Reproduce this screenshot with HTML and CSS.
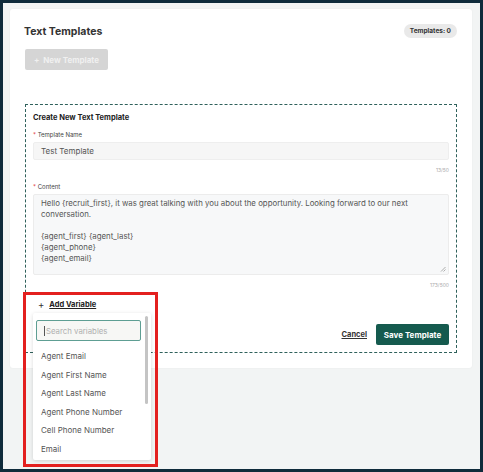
FILE: index.html
```html
<!DOCTYPE html>
<html>
<head>
<meta charset="utf-8">
<link rel="stylesheet" href="styles.css">
</head>
<body>
<div class="frame">
  <div class="card">
    <div class="header">
      <h1 class="title">Text Templates</h1>
      <span class="badge">Templates: 0</span>
    </div>
    <button class="new-btn">+&nbsp;&nbsp;New Template</button>
    <div class="create-box">
      <h2 class="box-title">Create New Text Template</h2>
      <div class="label"><span class="req">*</span> Template Name</div>
      <div class="input">Test Template</div>
      <div class="counter">13/50</div>
      <div class="label"><span class="req">*</span> Content</div>
      <div class="textarea">
        <div>Hello {recruit_first}, it was great talking with you about the opportunity. Looking forward to our next conversation.</div>
        <div class="blank"></div>
        <div>{agent_first} {agent_last}</div>
        <div>{agent_phone}</div>
        <div>{agent_email}</div>
        <svg class="grip" width="6" height="6" viewBox="0 0 6 6"><path d="M5.5 1 L1 5.5 M5.5 3.5 L3.5 5.5" stroke="#999" stroke-width="0.8"/></svg>
      </div>
      <div class="counter counter-last">173/500</div>
      <div class="picker">
        <div class="add-var"><span class="plus">+</span><span class="add-text">Add Variable</span></div>
        <div class="dropdown">
          <div class="search"><span class="caret"></span>Search variables</div>
          <ul class="options">
            <li>Agent Email</li>
            <li>Agent First Name</li>
            <li>Agent Last Name</li>
            <li>Agent Phone Number</li>
            <li>Cell Phone Number</li>
            <li>Email</li>
          </ul>
          <div class="scrollbar"></div>
        </div>
      </div>
      <div class="actions">
        <a class="cancel">Cancel</a>
        <button class="save">Save Template</button>
      </div>
    </div>
  </div>
  <div class="highlight"></div>
</div>
</body>
</html>
```

FILE: styles.css
```css
* { box-sizing: border-box; }
html, body { margin: 0; padding: 0; }
body { font-family: "Inter", "DejaVu Sans", sans-serif; color: #333; }

.frame {
  position: relative;
  width: 483px;
  height: 472px;
  border: 3px solid #0f2b3b;
  background: #f2f4f4;
  padding: 6px 8px 0 7px;
}

.card {
  background: #fff;
  border-radius: 3px;
  padding: 15px 15px 15px 14px;
  box-shadow: 0 0 2px rgba(0,0,0,0.05);
}

.header {
  display: flex;
  justify-content: space-between;
  align-items: center;
  height: 14px;
}
.title {
  margin: 0;
  font-size: 10.5px;
  font-weight: 700;
  color: #333;
}
.badge {
  background: #e9e9e9;
  border-radius: 7px;
  font-size: 6.5px;
  font-weight: 700;
  color: #333;
  padding: 3px 6px;
}

.new-btn {
  display: block;
  margin-top: 11px;
  margin-left: 1px;
  width: 83px;
  height: 21px;
  border: none;
  border-radius: 2px;
  background: #d5d5d5;
  color: #f0f0f0;
  font-family: inherit;
  font-size: 8px;
  font-weight: 700;
  padding: 0;
}

.create-box {
  margin-top: 34px;
  margin-left: 1px;
  border: 1px dashed #2f615b;
  padding: 8px 7px 7px 7px;
}
.box-title {
  margin: 0 0 9px 0;
  font-size: 7.5px;
  font-weight: 700;
  color: #222;
}
.label {
  font-size: 6px;
  color: #444;
  margin-bottom: 4px;
}
.req { color: #e03a3a; }

.input {
  height: 18px;
  background: #f6f6f6;
  border: 1px solid #eee;
  border-radius: 2px;
  padding-left: 7px;
  font-size: 8px;
  line-height: 16px;
  color: #555;
}
.counter {
  text-align: right;
  font-size: 5px;
  color: #aaa;
  margin: 7px 0 10px;
}
.counter-last { margin-bottom: 0; }

.textarea {
  position: relative;
  height: 81px;
  background: #f7f8f9;
  border: 1px solid #ececec;
  border-radius: 2px;
  padding: 3px 7px;
  font-size: 7.85px;
  line-height: 11px;
  color: #555;
}
.blank { height: 11px; }
.grip { position: absolute; right: 2px; bottom: 2px; }

.picker {
  position: relative;
  padding-left: 5px;
  margin-top: 12px;
}
.add-var {
  font-size: 7.5px;
  font-weight: 700;
  color: #222;
  line-height: 10px;
  display: flex;
  align-items: center;
}
.plus { font-size: 9.5px; font-weight: 400; margin-right: 5px; color: #333; }
.add-text { text-decoration: underline; }

.dropdown {
  position: absolute;
  left: 0;
  top: 13px;
  width: 118px;
  height: 147px;
  background: #fff;
  border-radius: 2px;
  box-shadow: 0 1px 4px rgba(0,0,0,0.15);
  overflow: hidden;
  z-index: 2;
}
.search {
  margin: 7px 0 0 3px;
  width: 105px;
  height: 21px;
  border: 1.5px solid #5e9e93;
  border-radius: 2px;
  background: #f7f7f5;
  font-size: 7.8px;
  color: #b0b0b0;
  line-height: 18px;
  padding-left: 7px;
  display: flex;
  align-items: center;
}
.caret {
  display: inline-block;
  width: 1px;
  height: 10px;
  background: #555;
  margin-right: 1px;
}
.options {
  list-style: none;
  margin: 6px 0 0 0;
  padding: 0;
}
.options li {
  height: 18.6px;
  line-height: 18.6px;
  padding-left: 8px;
  font-size: 8px;
  color: #555;
}
.scrollbar {
  position: absolute;
  right: 3px;
  top: 3px;
  width: 3px;
  height: 88px;
  background: #c4c4c4;
  border-radius: 2px;
}

.actions {
  display: flex;
  justify-content: flex-end;
  align-items: center;
  gap: 9px;
  margin-top: 14px;
}
.cancel {
  font-size: 7.5px;
  font-weight: 700;
  color: #333;
  text-decoration: underline;
}
.save {
  width: 73px;
  height: 21px;
  border: none;
  border-radius: 2px;
  background: #155a4e;
  color: #fff;
  font-family: inherit;
  font-size: 8px;
  font-weight: 700;
  padding: 0;
}

.highlight {
  position: absolute;
  left: 20px;
  top: 289px;
  width: 135px;
  height: 175px;
  border: 3px solid #e3201f;
  z-index: 3;
  pointer-events: none;
}
```
